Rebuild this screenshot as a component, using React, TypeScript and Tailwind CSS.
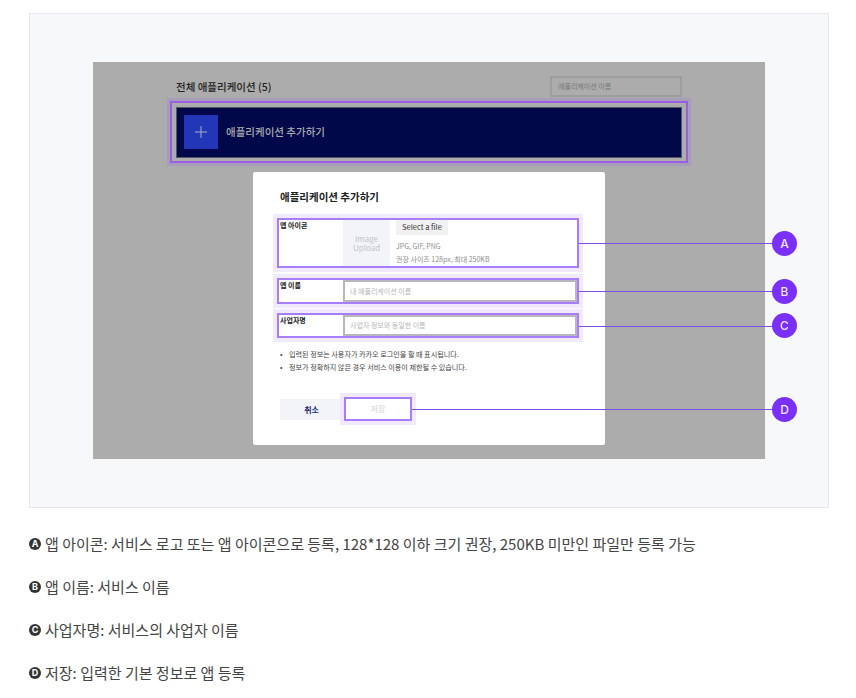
const FONT = "font-['Noto_Sans_CJK_KR','Noto_Sans',sans-serif]";

const callouts = [
  { label: "A", line: "left-[486px] top-[181px] w-[195px]", dot: "left-[679px] top-[169px]" },
  { label: "B", line: "left-[486px] top-[229px] w-[195px]", dot: "left-[679px] top-[217px]" },
  { label: "C", line: "left-[486px] top-[264px] w-[195px]", dot: "left-[679px] top-[251px]" },
  { label: "D", line: "left-[319px] top-[347px] w-[362px]", dot: "left-[679px] top-[335px]" },
];

const legend = [
  { mark: "A", text: "앱 아이콘: 서비스 로고 또는 앱 아이콘으로 등록, 128*128 이하 크기 권장, 250KB 미만인 파일만 등록 가능" },
  { mark: "B", text: "앱 이름: 서비스 이름" },
  { mark: "C", text: "사업자명: 서비스의 사업자 이름" },
  { mark: "D", text: "저장: 입력한 기본 정보로 앱 등록" },
];

const Field = ({ label, placeholder, height }: { label: string; placeholder: string; height: string }) => (
  <div className={`ml-6 flex w-[302px] border-2 border-[#a77dfb] ring-4 ring-[#f1eaff] ${height}`}>
    <div className="w-[64px] pl-[1px] text-[7px] font-bold leading-[11px] text-[#222]">{label}</div>
    <div className="flex flex-1 items-center border-2 border-[#b9b6bd] pl-[5px] text-[7px] text-[#b5b5b5]">{placeholder}</div>
  </div>
);

const App = () => {
  return (
    <div className={`${FONT} h-[698px] w-[856px] overflow-hidden bg-white pl-[29px] pt-[13px]`}>
      <div className="h-[495px] w-[800px] border border-[#e6e9ef] bg-[#f6f8f9] pl-[63px] pt-[48px]">
        <div className="relative flex h-[397px] w-[672px] flex-col items-center bg-[#abacab] pt-[14px] blur-[0.35px]">
          <div className="flex h-[21px] w-[506px] items-center justify-between">
            <div className="text-[10.5px] font-medium text-[#222]">전체 애플리케이션 (5)</div>
            <div className="flex h-[21px] w-[132px] items-center border-2 border-[#9c9d9c] pl-[6px] text-[7px] text-[#777]">애플리케이션 이름</div>
          </div>

          <div className="mt-1 flex h-[62px] w-[518px] items-center justify-center border-2 border-[#9a5ee0] ring-[3px] ring-[#a79cb9]">
            <div className="flex h-[51px] w-[506px] items-center border border-[#55565f] bg-[#00084a] pl-[7px]">
              <div className="flex h-[34px] w-[34px] items-center justify-center bg-[#2137b8]">
                <svg width="14" height="14" viewBox="0 0 14 14" stroke="#a9aec9" strokeWidth="1">
                  <path d="M7 1v12M1 7h12" />
                </svg>
              </div>
              <div className="ml-2 text-[10.5px] font-medium text-[#a9abae]">애플리케이션 추가하기</div>
            </div>
          </div>

          <div className="mt-[9px] h-[273px] w-[352px] rounded-[2px] bg-white pt-[15px]">
            <div className="pl-[27px] text-[10.5px] font-bold leading-[20px] text-[#222]">애플리케이션 추가하기</div>

            <div className="ml-6 mt-[11px] flex h-[50px] w-[302px] border-2 border-[#a77dfb] ring-4 ring-[#f1eaff]">
              <div className="w-[64px] pl-[1px] text-[7px] font-bold leading-[11px] text-[#222]">앱 아이콘</div>
              <div className="flex h-[46px] w-[47px] flex-col items-center justify-center bg-[#f3f4f8] text-[8px] leading-[9px] text-[#c2c3c7]">
                <div>Image</div>
                <div>Upload</div>
              </div>
              <div className="ml-[6px] flex flex-col items-start">
                <div className="flex h-[15px] w-[52px] items-center justify-center bg-[#f1f1f1] pb-[1px] text-[7.5px] text-[#333]">Select a file</div>
                <div className="mt-[5px] text-[7px] leading-[13px] text-[#8d8d8d]">JPG, GIF, PNG</div>
                <div className="text-[7px] leading-[12px] text-[#8d8d8d]">권장 사이즈 128px, 최대 250KB</div>
              </div>
            </div>

            <div className="mt-[10px]">
              <Field label="앱 이름" placeholder="내 애플리케이션 이름" height="h-[26px]" />
            </div>
            <div className="mt-[9px]">
              <Field label="사업자명" placeholder="사업자 정보와 동일한 이름" height="h-[25px]" />
            </div>

            <ul className="ml-[27px] mt-[10px] text-[7.1px] leading-[13px] text-[#444]">
              <li className="flex"><span className="w-[9px]">•</span>입력된 정보는 사용자가 카카오 로그인을 할 때 표시됩니다.</li>
              <li className="flex"><span className="w-[9px]">•</span>정보가 정확하지 않은 경우 서비스 이용이 제한될 수 있습니다.</li>
            </ul>

            <div className="ml-[27px] mt-[23px] flex items-start">
              <div className="mt-[2px] flex h-[21px] w-[60px] items-center justify-center bg-[#f3f4f8] pl-[3px] text-[8px] font-bold text-[#1c2a78]">취소</div>
              <div className="ml-[4px] flex h-[24px] w-[68px] items-center justify-center border-2 border-[#a77dfb] text-[8px] text-[#d0d0d0] ring-4 ring-[#f1eaff]">저장</div>
            </div>
          </div>

          {callouts.map((c) => (
            <div key={c.label}>
              <div className={`absolute h-px bg-[#7c4fe2] ${c.line}`} />
              <div className={`absolute flex h-[25px] w-[25px] items-center justify-center rounded-full bg-[#7a2ffb] font-['Inter',sans-serif] text-[12px] font-medium text-[#f1e8ff] ${c.dot}`}>
                {c.label}
              </div>
            </div>
          ))}
        </div>
      </div>

      <div className="mt-[21px] flex flex-col gap-[14px] text-[15px] leading-[29px] text-[#444]">
        {legend.map((l) => (
          <div key={l.mark} className="flex items-center">
            <span className="mr-[4px] flex h-[12px] w-[12px] items-center justify-center rounded-full bg-[#333] font-['Inter',sans-serif] text-[9px] font-bold text-white">
              {l.mark}
            </span>
            {l.text}
          </div>
        ))}
      </div>
    </div>
  );
};

export default App;
